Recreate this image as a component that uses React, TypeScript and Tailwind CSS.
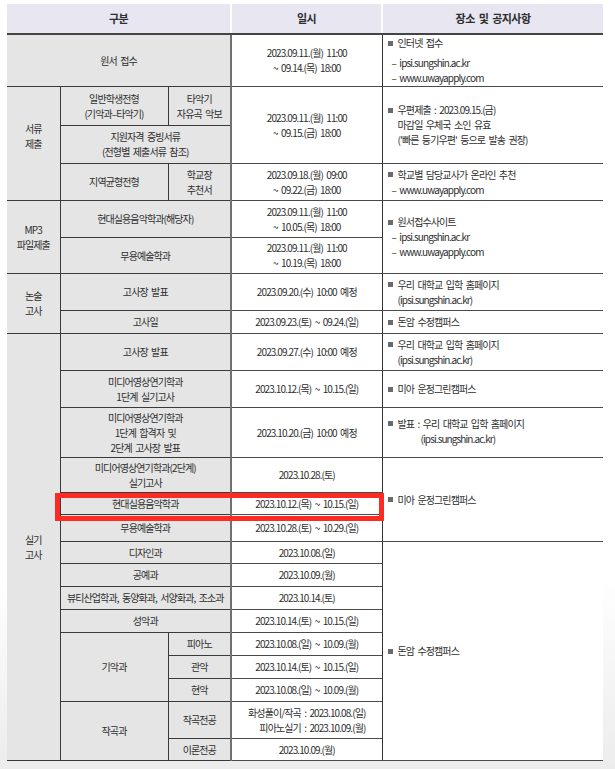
import React from "react";

const G = "bg-[#e5e5e5] border border-[#3a3a3a] text-center align-middle px-1";
const GL = "bg-[#e5e5e5] border border-[#3a3a3a] border-l-0 text-center align-middle px-1";
const D = "bg-white border-b border-b-[#4a4a4a] border-l-2 border-l-[#707070] text-center align-middle px-1";
const N = "bg-white border-b border-b-[#4a4a4a] border-l-[1.5px] border-l-[#333] text-left align-top pl-[5px]";
const NM = "bg-white border-b border-b-[#4a4a4a] border-l-[1.5px] border-l-[#333] text-left align-middle pl-[5px]";

function B() {
  return <span className="inline-block w-[5px] h-[5px] bg-[#6a6a6a] mr-[5px] align-middle relative -top-[1px]" />;
}

function L({ children }: { children: React.ReactNode }) {
  return <div>{children}</div>;
}

export default function App() {
  return (
    <div className="w-[615px] h-[769px] overflow-hidden bg-[linear-gradient(to_bottom,#ffffff_0%,#ffffff_75%,#ececec_100%)] font-['Noto_Sans_CJK_KR',sans-serif] text-[#2e2e2e] text-[10px] leading-[15px] tracking-[-0.09em] [word-spacing:2px]">
      <div className="relative pt-[4px] pl-[7px]">
        <table className="table-fixed border-collapse w-[596px]">
          <colgroup>
            <col className="w-[53px]" />
            <col className="w-[108px]" />
            <col className="w-[63px]" />
            <col className="w-[151px]" />
            <col className="w-[221px]" />
          </colgroup>
          <thead>
            <tr className="h-[30px]">
              <th colSpan={3} className="bg-[#e7e6f1] border-b-2 border-b-[#444] border-r-2 border-r-white font-bold text-[11px] tracking-[-0.05em]">구분</th>
              <th className="bg-[#e7e6f1] border-b-2 border-b-[#444] border-r-2 border-r-white font-bold text-[11px] tracking-[-0.05em]">일시</th>
              <th className="bg-[#e7e6f1] border-b-2 border-b-[#444] font-bold text-[11px] tracking-[-0.05em]">장소 및 공지사항</th>
            </tr>
          </thead>
          <tbody>
            <tr className="h-[52px]">
              <td colSpan={3} className={GL}>원서 접수</td>
              <td className={D}><L>2023.09.11.(월) 11:00</L><L>~ 09.14.(목) 18:00</L></td>
              <td className={N}>
                <div><B />인터넷 접수</div>
                <div className="pl-[4px] mt-[5px]">– ipsi.sungshin.ac.kr</div>
                <div className="pl-[4px]">– www.uwayapply.com</div>
              </td>
            </tr>
            <tr className="h-[39px]">
              <td rowSpan={3} className={GL}><div className="pb-[14px]"><L>서류</L><L>제출</L></div></td>
              <td className={G}><L>일반학생전형</L><L>(기악과–타악기)</L></td>
              <td className={G}><L>타악기</L><L>자유곡 악보</L></td>
              <td rowSpan={2} className={D}><L>2023.09.11.(월) 11:00</L><L>~ 09.15.(금) 18:00</L></td>
              <td rowSpan={2} className={NM}>
                <div><B />우편제출 : 2023.09.15.(금)</div>
                <div className="pl-[10px]">마감일 우체국 소인 유효</div>
                <div className="pl-[10px]">('빠른 등기우편' 등으로 발송 권장)</div>
              </td>
            </tr>
            <tr className="h-[38px]">
              <td colSpan={2} className={G}><L>지원자격 증빙서류</L><L>(전형별 제출서류 참조)</L></td>
            </tr>
            <tr className="h-[37px]">
              <td className={G}>지역균형전형</td>
              <td className={G}><L>학교장</L><L>추천서</L></td>
              <td className={D}><L>2023.09.18.(월) 09:00</L><L>~ 09.22.(금) 18:00</L></td>
              <td className={NM}>
                <div><B />학교별 담당교사가 온라인 추천</div>
                <div className="pl-[4px]">– www.uwayapply.com</div>
              </td>
            </tr>
            <tr className="h-[37px]">
              <td rowSpan={2} className={GL}><L>MP3</L><L>파일제출</L></td>
              <td colSpan={2} className={G}>현대실용음악학과(해당자)</td>
              <td className={D}><L>2023.09.11.(월) 11:00</L><L>~ 10.05.(목) 18:00</L></td>
              <td rowSpan={2} className={NM}>
                <div><B />원서접수사이트</div>
                <div className="pl-[4px]">– ipsi.sungshin.ac.kr</div>
                <div className="pl-[4px]">– www.uwayapply.com</div>
              </td>
            </tr>
            <tr className="h-[36px]">
              <td colSpan={2} className={G}>무용예술학과</td>
              <td className={D}><L>2023.09.11.(월) 11:00</L><L>~ 10.19.(목) 18:00</L></td>
            </tr>
            <tr className="h-[37px]">
              <td rowSpan={2} className={GL}><L>논술</L><L>고사</L></td>
              <td colSpan={2} className={G}>고사장 발표</td>
              <td className={D}>2023.09.20.(수) 10:00 예정</td>
              <td className={NM}>
                <div><B />우리 대학교 입학 홈페이지</div>
                <div className="pl-[10px]">(ipsi.sungshin.ac.kr)</div>
              </td>
            </tr>
            <tr className="h-[23px]">
              <td colSpan={2} className={G}>고사일</td>
              <td className={D}>2023.09.23.(토) ~ 09.24.(일)</td>
              <td className={NM}><B />돈암 수정캠퍼스</td>
            </tr>
            <tr className="h-[37px]">
              <td rowSpan={15} className={GL}><L>실기</L><L>고사</L></td>
              <td colSpan={2} className={G}>고사장 발표</td>
              <td className={D}>2023.09.27.(수) 10:00 예정</td>
              <td className={NM}>
                <div><B />우리 대학교 입학 홈페이지</div>
                <div className="pl-[10px]">(ipsi.sungshin.ac.kr)</div>
              </td>
            </tr>
            <tr className="h-[37px]">
              <td colSpan={2} className={G}><L>미디어영상연기학과</L><L>1단계 실기고사</L></td>
              <td className={D}>2023.10.12.(목) ~ 10.15.(일)</td>
              <td className={NM}><B />미아 운정그린캠퍼스</td>
            </tr>
            <tr className="h-[50px]">
              <td colSpan={2} className={G}><L>미디어영상연기학과</L><L>1단계 합격자 및</L><L>2단계 고사장 발표</L></td>
              <td className={D}>2023.10.20.(금) 10:00 예정</td>
              <td className={NM}>
                <div className="pb-[3px]">
                  <div><B />발표 : 우리 대학교 입학 홈페이지</div>
                  <div className="pl-[33px]">(ipsi.sungshin.ac.kr)</div>
                </div>
              </td>
            </tr>
            <tr className="h-[35px]">
              <td colSpan={2} className={G}><L>미디어영상연기학과(2단계)</L><L>실기고사</L></td>
              <td className={D}>2023.10.28.(토)</td>
              <td rowSpan={3} className={NM}><B />미아 운정그린캠퍼스</td>
            </tr>
            <tr className="h-[22px]">
              <td colSpan={2} className={G}>현대실용음악학과</td>
              <td className={D}>2023.10.12.(목) ~ 10.15.(일)</td>
            </tr>
            <tr className="h-[27px]">
              <td colSpan={2} className={G}>무용예술학과</td>
              <td className={D}>2023.10.28.(토) ~ 10.29.(일)</td>
            </tr>
            <tr className="h-[22px]">
              <td colSpan={2} className={G}>디자인과</td>
              <td className={D}>2023.10.08.(일)</td>
              <td rowSpan={9} className={NM}><B />돈암 수정캠퍼스</td>
            </tr>
            <tr className="h-[23px]">
              <td colSpan={2} className={G}>공예과</td>
              <td className={D}>2023.10.09.(월)</td>
            </tr>
            <tr className="h-[23px]">
              <td colSpan={2} className={`${G} whitespace-nowrap`}>뷰티산업학과, 동양화과, 서양화과, 조소과</td>
              <td className={D}>2023.10.14.(토)</td>
            </tr>
            <tr className="h-[23px]">
              <td colSpan={2} className={G}>성악과</td>
              <td className={D}>2023.10.14.(토) ~ 10.15.(일)</td>
            </tr>
            <tr className="h-[23px]">
              <td rowSpan={3} className={G}>기악과</td>
              <td className={G}>피아노</td>
              <td className={D}>2023.10.08.(일) ~ 10.09.(월)</td>
            </tr>
            <tr className="h-[23px]">
              <td className={G}>관악</td>
              <td className={D}>2023.10.14.(토) ~ 10.15.(일)</td>
            </tr>
            <tr className="h-[23px]">
              <td className={G}>현악</td>
              <td className={D}>2023.10.08.(일) ~ 10.09.(월)</td>
            </tr>
            <tr className="h-[37px]">
              <td rowSpan={2} className={G}>작곡과</td>
              <td className={G}>작곡전공</td>
              <td className={D}>
                <div className="inline-block text-right">
                  <L>화성풀이/작곡 : 2023.10.08.(일)</L>
                  <L>피아노실기 : 2023.10.09.(월)</L>
                </div>
              </td>
            </tr>
            <tr className="h-[22px]">
              <td className={G}>이론전공</td>
              <td className={D}>2023.10.09.(월)</td>
            </tr>
          </tbody>
        </table>
        <div className="absolute left-[55px] top-[493px] w-[329px] h-[28px] border-[5px] border-[#ff2b22]" />
      </div>
    </div>
  );
}
